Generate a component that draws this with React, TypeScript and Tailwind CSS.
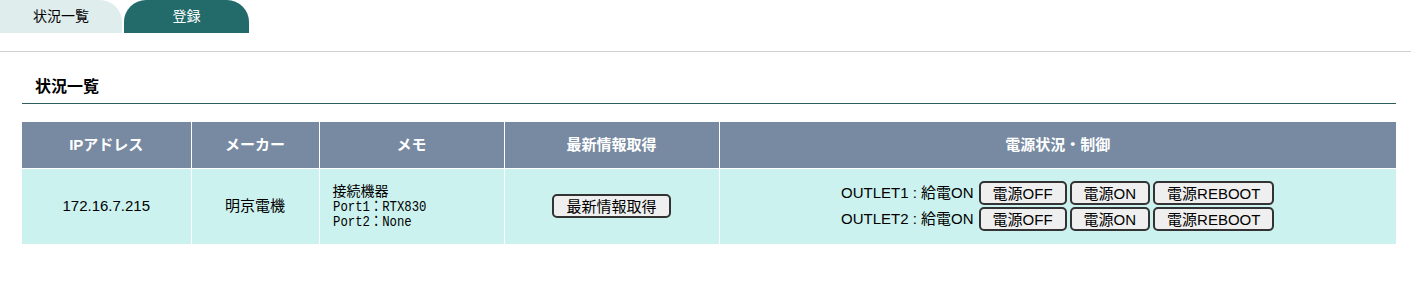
const sans = "font-['Liberation_Sans','Noto_Sans_CJK_JP',sans-serif]";
const mono = "font-['Liberation_Mono','Noto_Sans_CJK_JP',monospace]";

function PowerButton({ label }: { label: string }) {
  return (
    <button className="h-[24px] rounded-[5px] border-2 border-[#333] bg-[#efefef] px-[12px] text-[15px] leading-none text-black">
      {label}
    </button>
  );
}

function OutletRow({ no }: { no: number }) {
  return (
    <div className="flex items-center justify-center gap-[3px]">
      <span className="mr-[2px]">OUTLET{no} : 給電ON</span>
      <PowerButton label="電源OFF" />
      <PowerButton label="電源ON" />
      <PowerButton label="電源REBOOT" />
    </div>
  );
}

export default function App() {
  const headers = [
    { label: "IPアドレス", w: "w-[169px]" },
    { label: "メーカー", w: "w-[128px]" },
    { label: "メモ", w: "w-[185px]" },
    { label: "最新情報取得", w: "w-[215px]" },
    { label: "電源状況・制御", w: "" },
  ];
  return (
    <div className={`${sans} h-[281px] w-[1411px] bg-white text-[15px] text-black`}>
      {/* tabs */}
      <div className="flex h-[33px] gap-[2px] border-b border-[#d0d0d0] box-content pb-[18px]">
        <div className="flex w-[122px] items-center justify-center rounded-tr-[22px] bg-[#dfeded] text-[14px]">
          状況一覧
        </div>
        <div className="flex w-[125px] items-center justify-center rounded-t-[22px] bg-[#236b6b] text-[14px] text-white">
          登録
        </div>
      </div>

      <div className="px-[22px] pr-[15px]">
        <h2 className="mt-[24px] border-b border-[#2d5c5c] pb-[6px] pl-[13px] text-[16px] font-bold leading-[21px]">
          状況一覧
        </h2>

        <table className="mt-[18px] w-full border-collapse">
          <thead>
            <tr className="h-[46px] bg-[#778aa2] text-white">
              {headers.map((h, i) => (
                <th
                  key={i}
                  className={`${h.w} border-r border-white p-0 text-[15px] font-bold last:border-r-0`}
                >
                  {h.label}
                </th>
              ))}
            </tr>
          </thead>
          <tbody>
            <tr className="h-[76px] bg-[#ccf2ef] border-t border-white">
              <td className="border-r border-white text-center">172.16.7.215</td>
              <td className="border-r border-white text-center">明京電機</td>
              <td className="border-r border-white pl-[13px] text-[14px]">
                <div className="leading-[17px]">接続機器</div>
                <div className={`${mono} origin-left scale-x-[0.82] whitespace-nowrap text-[15px] leading-[15px]`}>
                  Port1：RTX830
                </div>
                <div className={`${mono} origin-left scale-x-[0.82] whitespace-nowrap text-[15px] leading-[15px]`}>
                  Port2：None
                </div>
              </td>
              <td className="border-r border-white text-center">
                <button className="h-[24px] rounded-[5px] border-2 border-[#333] bg-[#efefef] px-[12px] text-[15px] leading-none">
                  最新情報取得
                </button>
              </td>
              <td className="text-center">
                <div className="flex flex-col gap-[2px]">
                  <OutletRow no={1} />
                  <OutletRow no={2} />
                </div>
              </td>
            </tr>
          </tbody>
        </table>
      </div>
    </div>
  );
}
